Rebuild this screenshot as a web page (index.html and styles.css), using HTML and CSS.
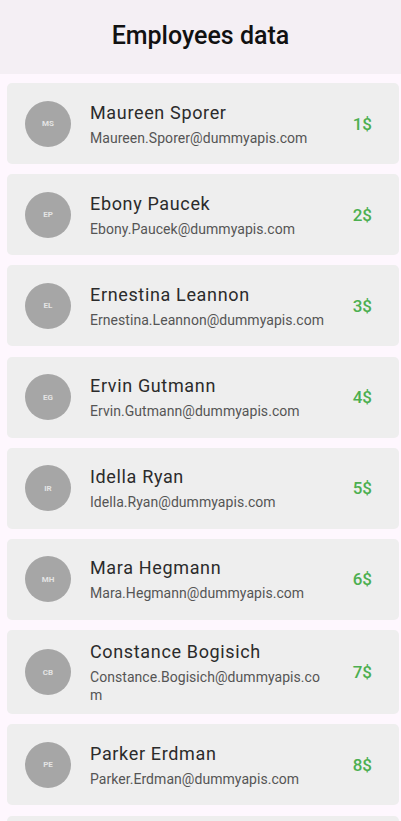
FILE: index.html
```html
<!DOCTYPE html>
<html lang="en">
<head>
<meta charset="utf-8">
<title>Employees data</title>
<link rel="stylesheet" href="styles.css">
</head>
<body>
<header class="appbar"><h1 class="title">Employees data</h1></header>
<main class="list">
  <div class="card"><div class="avatar">MS</div><div class="info"><div class="name">Maureen Sporer</div><div class="email">Maureen.Sporer@dummyapis.com</div></div><div class="salary">1$</div></div>
  <div class="card"><div class="avatar">EP</div><div class="info"><div class="name">Ebony Paucek</div><div class="email">Ebony.Paucek@dummyapis.com</div></div><div class="salary">2$</div></div>
  <div class="card"><div class="avatar">EL</div><div class="info"><div class="name">Ernestina Leannon</div><div class="email">Ernestina.Leannon@dummyapis.com</div></div><div class="salary">3$</div></div>
  <div class="card"><div class="avatar">EG</div><div class="info"><div class="name">Ervin Gutmann</div><div class="email">Ervin.Gutmann@dummyapis.com</div></div><div class="salary">4$</div></div>
  <div class="card"><div class="avatar">IR</div><div class="info"><div class="name">Idella Ryan</div><div class="email">Idella.Ryan@dummyapis.com</div></div><div class="salary">5$</div></div>
  <div class="card"><div class="avatar">MH</div><div class="info"><div class="name">Mara Hegmann</div><div class="email">Mara.Hegmann@dummyapis.com</div></div><div class="salary">6$</div></div>
  <div class="card"><div class="avatar">CB</div><div class="info"><div class="name">Constance Bogisich</div><div class="email">Constance.Bogisich@dummyapis.com</div></div><div class="salary">7$</div></div>
  <div class="card"><div class="avatar">PE</div><div class="info"><div class="name">Parker Erdman</div><div class="email">Parker.Erdman@dummyapis.com</div></div><div class="salary">8$</div></div>
  <div class="card"></div>
</main>
</body>
</html>
```
FILE: styles.css
```css
html, body {
  margin: 0;
  padding: 0;
}
body {
  background: #fef7fe;
  font-family: Roboto, "Liberation Sans", sans-serif;
  width: 401px;
  height: 821px;
  overflow: hidden;
}
.appbar {
  height: 74px;
  background: #f4eff4;
  display: flex;
  align-items: center;
  justify-content: center;
}
.title {
  margin: 0;
  font-size: 25px;
  font-weight: 500;
  color: #111;
  line-height: 32px;
  padding-bottom: 2px;
}
.list {
  display: flex;
  flex-direction: column;
  gap: 10.2px;
  padding: 9px 2px 0 7px;
}
.card {
  min-height: 81px;
  box-sizing: border-box;
  padding: 10px 27px 10px 18px;
  background: #eeeeee;
  border-radius: 5px;
  display: flex;
  align-items: center;
}
.avatar {
  flex: none;
  width: 46px;
  height: 46px;
  border-radius: 50%;
  background: #a6a6a6;
  color: #e4e4e4;
  font-size: 8px;
  font-weight: 700;
  display: flex;
  align-items: center;
  justify-content: center;
  margin-right: 19px;
}
.info {
  flex: 1;
  min-width: 0;
  margin-right: 22px;
}
.name {
  font-size: 18px;
  line-height: 24px;
  color: #2b2b2b;
  letter-spacing: 0.65px;
}
.email {
  margin-top: 4px;
  font-size: 14px;
  line-height: 18px;
  color: #555555;
  letter-spacing: 0.05px;
  overflow-wrap: anywhere;
}
.salary {
  flex: none;
  font-size: 17px;
  font-weight: 500;
  color: #4caf50;
}
```
